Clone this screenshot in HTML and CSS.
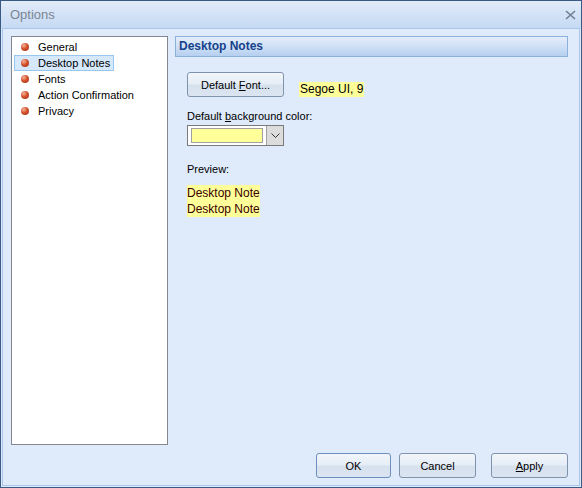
FILE: index.html
```html
<!DOCTYPE html>
<html>
<head>
<meta charset="utf-8">
<link rel="stylesheet" href="styles.css">
</head>
<body>
<div class="window">
  <div class="titlebar">
    <span class="title">Options</span>
    <svg class="close" width="11" height="10" viewBox="0 0 11 10">
      <path d="M1 1 L10 9 M10 1 L1 9" stroke="#717f92" stroke-width="1.6" fill="none"/>
    </svg>
  </div>
  <div class="client">
    <div class="main">
      <ul class="list">
        <li><span class="dot"></span>General</li>
        <li class="sel"><span class="dot"></span>Desktop Notes</li>
        <li><span class="dot"></span>Fonts</li>
        <li><span class="dot"></span>Action Confirmation</li>
        <li><span class="dot"></span>Privacy</li>
      </ul>
      <div class="panel">
        <div class="header">Desktop Notes</div>
        <div class="content">
          <div class="fontrow">
            <button class="btn fontbtn">Default <u>F</u>ont...</button>
            <span class="fontname">Segoe UI, 9</span>
          </div>
          <div class="label">Default <u>b</u>ackground color:</div>
          <div class="combo">
            <div class="swatchwrap"><div class="swatch"></div></div>
            <div class="arrow">
              <svg width="9" height="5" viewBox="0 0 9 5"><path d="M0.5 0.5 L4.5 4.5 L8.5 0.5" stroke="#333" fill="none"/></svg>
            </div>
          </div>
          <div class="label preview-label">Preview:</div>
          <div class="preview">
            <span>Desktop Note</span>
            <span>Desktop Note</span>
          </div>
        </div>
      </div>
    </div>
    <div class="buttons">
      <button class="btn ok">OK</button>
      <button class="btn cancel">Cancel</button>
      <button class="btn apply"><u>A</u>pply</button>
    </div>
  </div>
</div>
</body>
</html>
```

FILE: styles.css
```css
html, body {
  margin: 0;
  padding: 0;
}
body {
  width: 582px;
  height: 488px;
  overflow: hidden;
  font-family: "DejaVu Sans", sans-serif;
  font-size: 11px;
}
.window {
  box-sizing: border-box;
  width: 582px;
  height: 488px;
  border: 1px solid #3a5a85;
  background: #dfeafb;
  display: flex;
  flex-direction: column;
}
.titlebar {
  height: 27px;
  flex: none;
  background: linear-gradient(#e2ecf9 0%, #d3e2f6 50%, #c6daf3 100%);
  display: flex;
  align-items: center;
  justify-content: space-between;
  padding: 0 5px 0 9px;
  box-sizing: border-box;
}
.title {
  font-family: "Liberation Sans", sans-serif;
  font-size: 13px;
  color: #7a8593;
}
.close {
  margin-top: 1px;
}
.client {
  flex: 1;
  margin: 0 1px 2px 1px;
  border: 1px solid #a9c5ea;
  background: #dfeafb;
  display: flex;
  flex-direction: column;
  padding: 7px 11px 7px 8px;
}
.main {
  display: flex;
  gap: 7px;
  height: 409px;
}
.list {
  box-sizing: border-box;
  width: 157px;
  height: 409px;
  margin: 0;
  padding: 2px 2px;
  list-style: none;
  background: #fff;
  border: 1px solid #828790;
  font-family: "Liberation Sans", sans-serif;
  font-size: 11px;
  color: #000;
}
.list li {
  height: 14px;
  line-height: 14px;
  display: flex;
  align-items: center;
  padding-left: 6px;
  border: 1px solid transparent;
  width: fit-content;
  padding-right: 3px;
}
.list li.sel {
  background: #d6e8fb;
  border-color: #99c6ee;
}
.dot {
  width: 8px;
  height: 8px;
  border-radius: 50%;
  background: radial-gradient(circle at 35% 30%, #f7b49c 0%, #d4522c 45%, #9a2d12 100%);
  margin-right: 9px;
  flex: none;
}
.panel {
  width: 393px;
  display: flex;
  flex-direction: column;
}
.header {
  box-sizing: border-box;
  height: 21px;
  border: 1px solid #8cb0dc;
  background: linear-gradient(#e4eefb 0%, #cfe0f6 50%, #b5cff0 100%);
  color: #15428b;
  font-family: "Liberation Sans", sans-serif;
  font-weight: bold;
  font-size: 12px;
  line-height: 19px;
  padding-left: 3px;
}
.content {
  padding: 15px 0 0 12px;
  font-family: "Liberation Sans", sans-serif;
  font-size: 11px;
}
.fontrow {
  display: flex;
  align-items: flex-end;
}
.btn {
  box-sizing: border-box;
  font-family: "Liberation Sans", sans-serif;
  font-size: 11px;
  color: #000;
  height: 25px;
  border: 1px solid #7f93ad;
  border-radius: 3px;
  background: linear-gradient(#f2f6fb 0%, #e6edf6 49%, #d6e1ee 51%, #dbe5f1 100%);
  padding: 0;
}
.fontbtn {
  width: 97px;
  height: 25px;
}
.fontname {
  background: #ffff99;
  font-size: 12px;
  margin-left: 15px;
  line-height: 15px;
  margin-bottom: 0;
  padding: 0 1px;
}
.label {
  margin-top: 12px;
  line-height: 14px;
}
.combo {
  box-sizing: border-box;
  margin-top: 2px;
  width: 97px;
  height: 21px;
  border: 1px solid #7a7a7a;
  background: #fff;
  display: flex;
}
.swatchwrap {
  flex: 1;
  padding: 2px 3px;
}
.swatch {
  box-sizing: border-box;
  height: 100%;
  background: #ffff99;
  border: 1px solid #a0a0a0;
}
.arrow {
  width: 16px;
  background: #dcdcdc;
  border-left: 1px solid #a0a0a0;
  display: flex;
  align-items: center;
  justify-content: center;
}
.preview-label {
  margin-top: 16px;
}
.preview {
  margin-top: 9px;
  display: flex;
  flex-direction: column;
  align-items: flex-start;
  font-size: 12px;
  color: #3a0000;
}
.preview span {
  background: #ffff99;
  line-height: 16px;
}
.buttons {
  margin-top: 8px;
  display: flex;
  justify-content: flex-end;
  gap: 8px;
}
.ok {
  width: 75px;
  border-color: #6d8fbb;
}
.cancel {
  width: 77px;
}
.apply {
  width: 77px;
  margin-left: 7px;
}
```
